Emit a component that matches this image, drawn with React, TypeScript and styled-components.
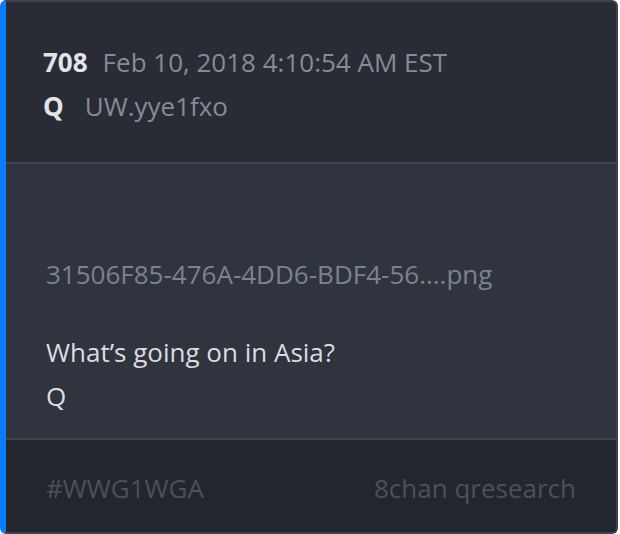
import styled, { createGlobalStyle } from "styled-components";

const Global = createGlobalStyle`
  html, body {
    margin: 0;
    padding: 0;
    background: #ffffff;
  }
  body {
    font-family: "Open Sans", "Noto Sans", sans-serif;
  }
`;

const CardEl = styled.div`
  box-sizing: border-box;
  width: 618px;
  height: 534px;
  display: flex;
  flex-direction: column;
  border: 2px solid #3d414a;
  border-left: 6px solid #0a7cff;
  border-radius: 6px;
  overflow: hidden;
  background-color: #2f343e;
`;

const HeaderEl = styled.div`
  height: 162px;
  box-sizing: border-box;
  padding: 38px 0 0 37px;
  background-color: #292c34;
  border-bottom: 2px solid #3f444e;
  display: flex;
  flex-direction: column;
`;

const MetaRow = styled.div<{ $gap?: number }>`
  display: flex;
  align-items: baseline;
  height: 44px;
  font-size: 26px;
  line-height: 44px;
  gap: ${(p) => p.$gap ?? 15}px;
`;

const Strong = styled.span`
  font-weight: 700;
  color: #e3e4e6;
`;

const Muted = styled.span`
  color: #858b98;
`;

const BodyEl = styled.div`
  flex: 1;
  box-sizing: border-box;
  padding: 88px 0 0 40px;
  background-color: #2f343e;
  border-bottom: 2px solid #3f444e;
`;

const FileName = styled.div`
  font-size: 26px;
  line-height: 44px;
  color: #7c8291;
  margin-bottom: 34px;
`;

const MessageLine = styled.div`
  font-size: 26px;
  line-height: 44px;
  color: #dcdde0;
`;

const FooterEl = styled.div`
  height: 92px;
  box-sizing: border-box;
  padding: 4px 40px 0;
  background-color: #23262e;
  display: flex;
  align-items: center;
  justify-content: space-between;
  font-size: 26px;
  color: #4b505b;
`;

export default function App() {
  return (
    <>
      <Global />
      <CardEl>
        <HeaderEl>
          <MetaRow>
            <Strong>708</Strong>
            <Muted>Feb 10, 2018 4:10:54 AM EST</Muted>
          </MetaRow>
          <MetaRow $gap={21}>
            <Strong>Q</Strong>
            <Muted>UW.yye1fxo</Muted>
          </MetaRow>
        </HeaderEl>
        <BodyEl>
          <FileName>31506F85-476A-4DD6-BDF4-56....png</FileName>
          <MessageLine>What’s going on in Asia?</MessageLine>
          <MessageLine>Q</MessageLine>
        </BodyEl>
        <FooterEl>
          <span>#WWG1WGA</span>
          <span>8chan qresearch</span>
        </FooterEl>
      </CardEl>
    </>
  );
}
